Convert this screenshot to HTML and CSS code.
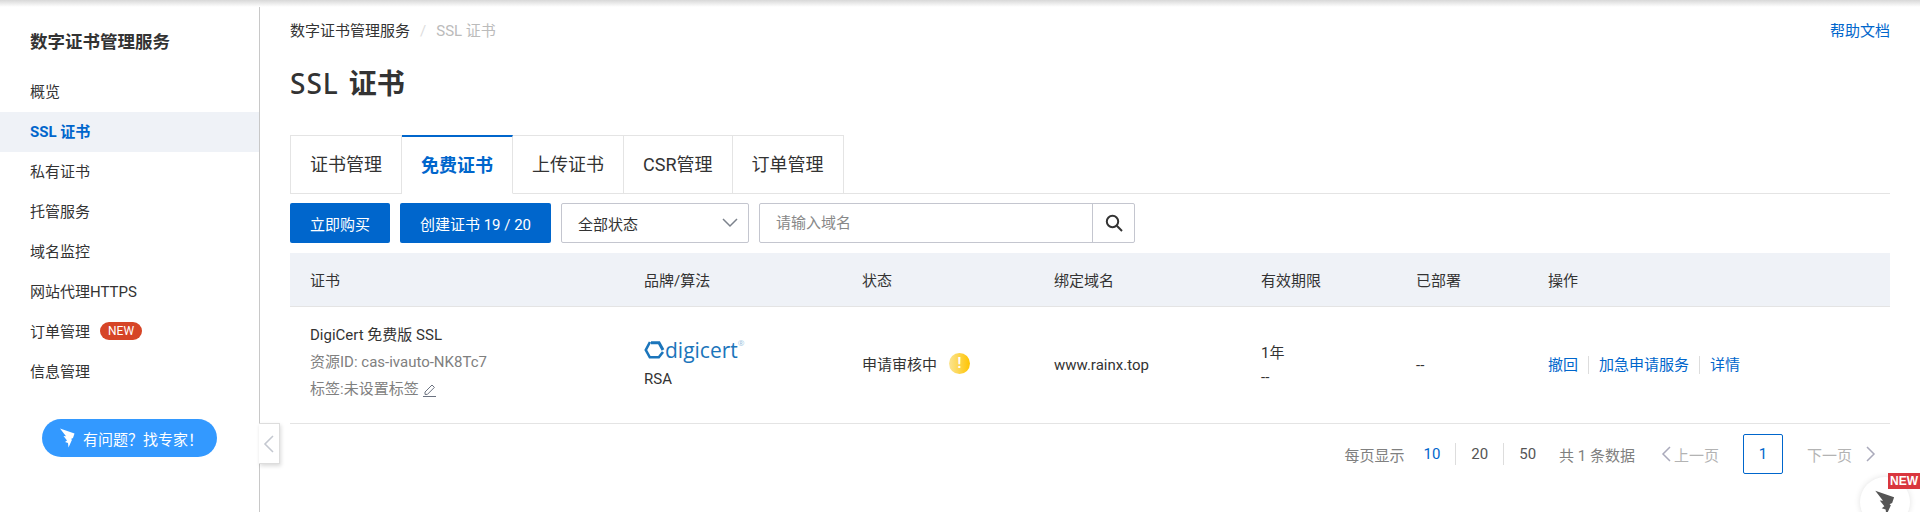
FILE: index.html
```html
<!DOCTYPE html>
<html lang="zh-CN">
<head>
    <meta charset="UTF-8">
    <title>SSL 证书</title>
    <link rel="stylesheet" href="styles.css">
</head>
<body>
    <div class="top-shadow"></div>
    <div class="layout">
        <!-- Sidebar -->
        <aside class="sidebar">
            <h2 class="side-title">数字证书管理服务</h2>
            <ul class="side-menu">
                <li>概览</li>
                <li class="active">SSL 证书</li>
                <li>私有证书</li>
                <li>托管服务</li>
                <li>域名监控</li>
                <li>网站代理HTTPS</li>
                <li>订单管理<span class="new-pill">NEW</span></li>
                <li>信息管理</li>
            </ul>
            <div class="expert-btn">
                <svg width="15" height="20" viewBox="0 0 15 20"><path d="M0 0.5l14.5 5-1.5 4.500-2 1 1 .8-3.500 7.700-.5-4.500-3-1 2-1.500-3.500-4.500 2.500.2z" fill="#fff"/></svg>
                <span>有问题？找专家！</span>
            </div>
            <div class="collapse">
                <svg width="12" height="18" viewBox="0 0 12 18"><path d="M10 1L2 9l8 8" fill="none" stroke="#c4c8d0" stroke-width="1.6"/></svg>
            </div>
        </aside>

        <!-- Content -->
        <main class="main">
            <div class="crumb-row">
                <div class="crumbs"><span>数字证书管理服务</span><i>/</i><em>SSL 证书</em></div>
                <a class="help">帮助文档</a>
            </div>
            <h1 class="page-title"><span>SSL</span> <b>证书</b></h1>

            <div class="tabs">
                <div class="tab">证书管理</div>
                <div class="tab on">免费证书</div>
                <div class="tab">上传证书</div>
                <div class="tab">CSR管理</div>
                <div class="tab">订单管理</div>
            </div>

            <div class="toolbar">
                <button class="btn btn-buy">立即购买</button>
                <button class="btn btn-create">创建证书 19 / 20</button>
                <div class="select">全部状态
                    <svg width="16" height="10" viewBox="0 0 16 10"><path d="M1 1l7 7 7-7" fill="none" stroke="#7c828c" stroke-width="1.5"/></svg>
                </div>
                <div class="search">
                    <div class="search-input">请输入域名</div>
                    <div class="search-btn">
                        <svg width="18" height="18" viewBox="0 0 18 18"><circle cx="7.500" cy="7.500" r="5.700" fill="none" stroke="#333" stroke-width="2"/><path d="M11.800 11.800L17 17" stroke="#333" stroke-width="2"/></svg>
                    </div>
                </div>
            </div>

            <div class="table">
                <div class="row head">
                    <div>证书</div><div>品牌/算法</div><div>状态</div><div>绑定域名</div><div>有效期限</div><div>已部署</div><div>操作</div>
                </div>
                <div class="row body">
                    <div class="cert">
                        <p>DigiCert 免费版 SSL</p>
                        <p class="muted">资源ID: cas-ivauto-NK8Tc7</p>
                        <p class="muted">标签:未设置标签
                            <svg class="pen" width="15" height="15" viewBox="0 0 15 15"><path d="M3 10l7-7 2.400 2.400-7 7H3z" fill="none" stroke="#6b7280"/><path d="M1 14.500h13" stroke="#6b7280"/></svg>
                        </p>
                    </div>
                    <div class="brand">
                        <div class="logo">
                            <svg width="21" height="19" viewBox="0 0 21 19"><path d="M7 1.700h8l4 7.300" fill="none" stroke="#1b75bb" stroke-width="3"/><path d="M6 1L1.800 9l4 7.300h9L19 11" fill="none" stroke="#1b75bb" stroke-width="2.600"/></svg>
                            <span>digicert</span><sup>®</sup>
                        </div>
                        <p>RSA</p>
                    </div>
                    <div class="status">申请审核中<span class="coin">!</span></div>
                    <div>www.rainx.top</div>
                    <div class="period"><p>1年</p><p>--</p></div>
                    <div>--</div>
                    <div class="ops"><a>撤回</a><a>加急申请服务</a><a>详情</a></div>
                </div>
            </div>

            <div class="pager">
                <span class="muted-label">每页显示</span>
                <span class="size cur">10</span><span class="size">20</span><span class="size last">50</span>
                <span class="total">共 1 条数据</span>
                <span class="page-link">
                    <svg width="10" height="16" viewBox="0 0 10 16"><path d="M9 1L2 8l7 7" fill="none" stroke="#aab" stroke-width="1.500"/></svg>上一页</span>
                <span class="page-num">1</span>
                <span class="page-link next">下一页
                    <svg width="10" height="16" viewBox="0 0 10 16"><path d="M1 1l7 7-7 7" fill="none" stroke="#aab" stroke-width="1.500"/></svg></span>
            </div>
        </main>
    </div>

    <div class="float-help">
        <svg width="20" height="26" viewBox="0 0 15 20"><path d="M0 0.500l14.500 5-1.500 4.500-2 1 1 .8-3.500 7.700-.5-4.500-3-1 2-1.500-3.500-4.500 2.500.2z" fill="#555"/></svg>
        <span class="float-new">NEW</span>
    </div>
</body>
</html>
```

FILE: styles.css
```css
/* General */
* {
    box-sizing: border-box;
}

html, body {
    height: 512px;
    overflow: hidden;
}

body {
    margin: 0;
    font-family: Roboto, "Noto Sans CJK SC", sans-serif;
    font-size: 15px;
    color: #333;
    background: #fff;
}

p {
    margin: 0;
}

.top-shadow {
    position: absolute;
    left: 0;
    right: 0;
    top: 0;
    height: 7px;
    background: linear-gradient(#d8d8d8, #fff);
    z-index: 2;
}

.layout {
    display: flex;
    height: 512px;
}

/* Sidebar */
.sidebar {
    position: relative;
    width: 260px;
    flex: none;
    border-right: 1px solid #c8c8c8;
    padding-top: 28px;
}

.side-title {
    margin: 0 0 16px 30px;
    font-size: 17.500px;
    line-height: 28px;
    font-weight: 700;
    color: #333;
}

.side-menu {
    list-style: none;
    margin: 0;
    padding: 0;
}

.side-menu li {
    height: 40px;
    line-height: 40px;
    padding-left: 30px;
}

.side-menu li.active {
    background: #eff2f7;
    color: #0066cc;
    font-weight: 700;
}

.new-pill {
    display: inline-block;
    margin-left: 10px;
    padding: 0 8px;
    height: 18px;
    line-height: 18px;
    border-radius: 9px;
    background: #d64527;
    color: #fff;
    font-size: 12px;
    vertical-align: 2px;
}

.expert-btn {
    display: flex;
    align-items: center;
    gap: 8px;
    margin: 27px 0 0 42px;
    width: 175px;
    height: 38px;
    padding-left: 18px;
    border-radius: 19px;
    background: #3399ff;
    color: #fff;
}

.collapse {
    position: absolute;
    left: 259px;
    top: 423px;
    width: 21px;
    height: 41px;
    display: flex;
    align-items: center;
    justify-content: center;
    background: #fff;
    border: 1px solid #ddd;
    border-left: none;
    box-shadow: 1px 2px 4px rgba(0, 0, 0, 0.15);
}

/* Main */
.main {
    flex: 1;
    padding: 0 30px;
    min-width: 0;
}

.crumb-row {
    display: flex;
    justify-content: space-between;
    padding-top: 20px;
    line-height: 22px;
}

.crumbs i {
    margin: 0 10px;
    font-style: normal;
    color: #ddd;
}

.crumbs em {
    font-style: normal;
    color: #bbb;
}

.help {
    color: #0066cc;
}

.page-title {
    margin: 21px 0 0;
    font-size: 28px;
    line-height: 40px;
    font-weight: 500;
}

.page-title span {
    font-family: "Noto Sans", sans-serif;
    letter-spacing: 1px;
}

.page-title b {
    margin-left: 3px;
    font-weight: 700;
}

/* Tabs */
.tabs {
    display: flex;
    margin-top: 30px;
    height: 59px;
    border-bottom: 1px solid #e4e4e4;
}

.tab {
    height: 59px;
    padding: 0 19px;
    line-height: 57px;
    font-size: 18px;
    border: 1px solid #e4e4e4;
    border-left: none;
    background: #fff;
}

.tab:first-child {
    border-left: 1px solid #e4e4e4;
}

.tab.on {
    border-top: 2px solid #0066cc;
    border-bottom-color: #fff;
    color: #0066cc;
    font-weight: 700;
}

/* Toolbar */
.toolbar {
    display: flex;
    gap: 10px;
    margin-top: 9px;
    height: 40px;
}

.btn {
    border: none;
    border-radius: 2px;
    background: #0066cc;
    color: #fff;
    font-family: inherit;
    font-size: 15px;
    height: 40px;
}

.btn-buy {
    width: 100px;
}

.btn-create {
    width: 151px;
}

.select {
    width: 188px;
    height: 40px;
    padding: 0 10px 0 16px;
    display: flex;
    align-items: center;
    justify-content: space-between;
    border: 1px solid #c4c6cf;
    border-radius: 2px;
}

.search {
    display: flex;
    width: 376px;
    height: 40px;
    border: 1px solid #c4c6cf;
    border-radius: 2px;
}

.search-input {
    flex: 1;
    padding-left: 16px;
    line-height: 38px;
    color: #888;
}

.search-btn {
    width: 42px;
    display: flex;
    align-items: center;
    justify-content: center;
    border-left: 1px solid #c4c6cf;
}

/* Table */
.table {
    margin-top: 10px;
}

.row {
    display: grid;
    grid-template-columns: 334px 218px 192px 207px 155px 132px 1fr;
    align-items: center;
    padding-left: 20px;
}

.row.head {
    height: 54px;
    background: #eff2f7;
    border-bottom: 1px solid #e4e4e4;
}

.row.body {
    height: 117px;
    border-bottom: 1px solid #e4e4e4;
}

.cert {
    margin-bottom: 5px;
}

.cert p {
    line-height: 27px;
}

.muted {
    color: #808080;
}

.pen {
    vertical-align: -3px;
}

.brand {
    margin-bottom: 5px;
}

.logo {
    display: flex;
    align-items: center;
    height: 26px;
    color: #1b75bb;
    font-family: "Open Sans", sans-serif;
    font-size: 21px;
}

.logo span {
    line-height: 26px;
}

.logo sup {
    font-size: 8px;
    line-height: 12px;
    align-self: flex-start;
    color: #9cc3e0;
}

.brand p {
    margin-top: 7px;
}

.status {
    display: flex;
    align-items: center;
    margin-bottom: 4px;
}

.coin {
    display: inline-block;
    width: 21px;
    height: 21px;
    margin-left: 12px;
    border-radius: 50%;
    background: linear-gradient(90deg, #fbe492, #ffc400);
    color: #fff;
    text-align: center;
    font-size: 14px;
    line-height: 21px;
    font-weight: 700;
}

.period p {
    line-height: 24px;
}

.ops {
    margin-bottom: 3px;
}

.ops a {
    color: #0066cc;
    padding-right: 10px;
    margin-right: 10px;
    border-right: 1px solid #ddd;
}

.ops a:last-child {
    border-right: none;
}

/* Pager */
.pager {
    display: flex;
    align-items: center;
    justify-content: flex-end;
    height: 40px;
    margin-top: 10px;
    padding-right: 14px;
    color: #808080;
}

.muted-label {
    margin-right: 4px;
}

.size {
    padding: 0 15px;
    color: #555;
    line-height: 22px;
    border-right: 1px solid #ddd;
}

.size.last {
    border-right: none;
}

.size.cur {
    color: #0066cc;
}

.total {
    margin: 0 26px 0 8px;
}

.page-link {
    display: flex;
    align-items: center;
    gap: 3px;
    color: #b3b3b3;
}

.page-link.next {
    gap: 14px;
}

.page-num {
    width: 40px;
    height: 40px;
    margin: 0 24px;
    line-height: 38px;
    text-align: center;
    color: #0066cc;
    border: 1px solid #0066cc;
    border-radius: 2px;
}

/* Floating help */
.float-help {
    position: absolute;
    left: 1860px;
    top: 477px;
    width: 50px;
    height: 50px;
    border-radius: 50%;
    background: #fff;
    box-shadow: 0 0 6px rgba(0, 0, 0, 0.12);
    padding: 13px 0 0 15px;
}

.float-new {
    position: absolute;
    left: 28px;
    top: -4px;
    width: 32px;
    text-align: center;
    background: #d9363e;
    color: #fff;
    font-family: "Liberation Sans", sans-serif;
    font-size: 12px;
    font-weight: 700;
    line-height: 16px;
}
```
